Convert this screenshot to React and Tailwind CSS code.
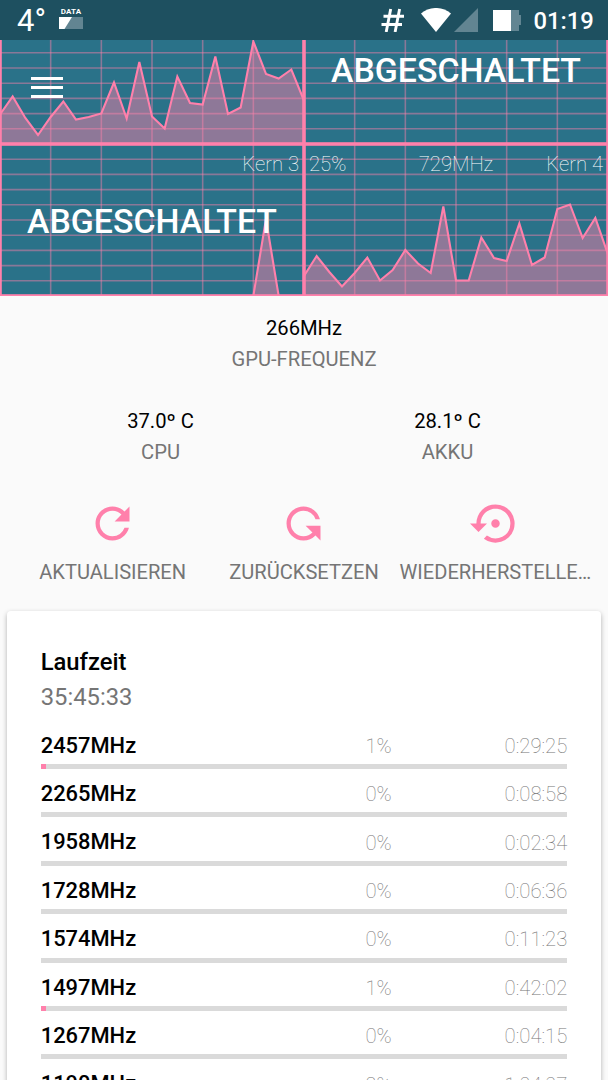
import React from 'react'
import { MdRefresh, MdSettingsBackupRestore } from 'react-icons/md'

const BASE = 152

const core1 = [122.5, 104.5, 126, 143, 125, 109.5, 127.5, 125, 121.5, 90.5, 126.5, 70, 124.5, 136.5, 84.5, 111, 112.5, 64.5, 122, 115.5, 49.5, 82, 86.5, 77.5, 108.5]
const core3 = [152, 152, 152, 152, 152, 152, 152, 152, 152, 152, 152, 152, 152, 152, 152, 152, 152, 152, 152, 152, 152, 75, 152, 152, 152]
const core4 = [132, 112, 128, 142.5, 129, 113.5, 136.5, 126, 106, 119.5, 129, 62.5, 136.5, 136.5, 93.5, 114, 117, 79.5, 121, 113.5, 65, 60.5, 94, 74, 110.5]

const states = [
  { freq: '2457MHz', percent: 1, time: '0:29:25' },
  { freq: '2265MHz', percent: 0, time: '0:08:58' },
  { freq: '1958MHz', percent: 0, time: '0:02:34' },
  { freq: '1728MHz', percent: 0, time: '0:06:36' },
  { freq: '1574MHz', percent: 0, time: '0:11:23' },
  { freq: '1497MHz', percent: 1, time: '0:42:02' },
  { freq: '1267MHz', percent: 0, time: '0:04:15' },
  { freq: '1190MHz', percent: 2, time: '1:04:07' },
]

function Graph({ data }) {
  const step = 304 / 24
  const line = data ? data.map((y, i) => `${i * step},${y}`).join(' ') : ''
  return (
    <svg viewBox="0 0 304 152" className="block h-[152px] w-[304px]">
      {data && <polygon points={`0,${BASE} ${line} 304,${BASE}`} fill="#ff80ab" fillOpacity="0.47" />}
      <g stroke="#ff80ab" strokeOpacity="0.45" strokeWidth="1.6">
        {[1, 2, 3, 4, 5, 6, 7, 8, 9].map(i => <line key={i} x1="0" x2="304" y1={i * 15.2} y2={i * 15.2} />)}
        {[1, 2, 3, 4, 5].map(i => <line key={i} y1="0" y2="152" x1={i * 50.67} x2={i * 50.67} />)}
      </g>
      {data && <polyline points={line} fill="none" stroke="#ff80ab" strokeWidth="2.1" />}
      <rect width="304" height="152" fill="none" stroke="#ff80ab" strokeWidth="3.6" />
    </svg>
  )
}

function StatusBar() {
  return (
    <div className="flex h-10 items-center bg-[#1e5060] text-white">
      <div className="ml-[17px] w-10 text-[31px] leading-10">
        <span className="relative top-px">4°</span>
      </div>
      <div className="ml-[2px] flex w-6 flex-col items-center">
        <span className="-mt-[5px] text-[8px] font-bold leading-[9px] tracking-[0.2px]">DATA</span>
        <svg viewBox="0 0 24 12" className="mt-px h-3 w-6">
          <rect width="24" height="12" fill="#628592" />
          <path d="M0 0h13L5.500 12H0z" fill="#fff" />
        </svg>
      </div>
      <svg viewBox="0 0 24 24" className="ml-[298px] h-6 w-6 shrink-0" fill="none" stroke="#fff" strokeWidth="2.9">
        <path d="M9.700 1 5.200 24M18.600 1l-4.500 23M2.500 8.300H23M.5 16.500h20.500" />
      </svg>
      <svg viewBox="0 0 30 24" className="ml-[15.500px] h-6 w-[30px] shrink-0">
        <path d="M0 5.600C8.500-1.900 21.500-1.900 30 5.600L15 24z" fill="#fff" />
      </svg>
      <svg viewBox="0 0 24 24" className="ml-[3px] h-6 w-6 shrink-0">
        <path d="M24 0v24H0z" fill="#628592" />
      </svg>
      <svg viewBox="0 0 28 21" className="ml-[15px] h-[21px] w-7 shrink-0">
        <path d="M17 0h9v5h2v10h-2v6h-9z" fill="#628592" />
        <path d="M0 0h18v21H0z" fill="#fff" />
      </svg>
      <div className="ml-[13px] text-[23.800px] font-medium leading-10">
        <span className="relative top-px">01:19</span>
      </div>
    </div>
  )
}

function Offline() {
  return <span className="absolute inset-x-0 text-center text-[33.800px] font-medium leading-10 text-white">ABGESCHALTET</span>
}

function Graphs() {
  return (
    <div className="relative grid h-[257px] grid-cols-2 grid-rows-[104px_153px] overflow-hidden">
      <div className="flex items-end overflow-hidden bg-[#2a7289]"><Graph data={core1} /></div>
      <div className="relative flex items-end overflow-hidden bg-[#2a7289]">
        <Graph />
        <div className="absolute inset-x-0 top-[11px]"><Offline /></div>
      </div>
      <div className="relative h-[152px] bg-[#2a7289]">
        <Graph data={core3} />
        <div className="absolute inset-x-0 top-[58px]"><Offline /></div>
        <span className="absolute right-[5px] top-2 text-[20.300px] font-thin leading-6 text-white">Kern 3</span>
      </div>
      <div className="relative h-[152px] bg-[#2a7289]">
        <Graph data={core4} />
        <div className="absolute inset-x-[5px] top-2 grid grid-cols-3 text-[20.300px] font-thin leading-6 text-white">
          <span>25%</span>
          <span className="text-center">729MHz</span>
          <span className="text-right">Kern 4</span>
        </div>
      </div>
      <button className="absolute left-[31px] top-[36.500px] flex w-8 flex-col gap-[5.500px]" aria-label="Menü">
        <span className="h-[3.600px] w-full bg-white" />
        <span className="h-[3.600px] w-full bg-white" />
        <span className="h-[3.600px] w-full bg-white" />
      </button>
    </div>
  )
}

function Info({ value, label }) {
  return (
    <div className="flex flex-col items-center text-[20.200px]">
      <div className="h-[31px] leading-6 text-black">{value}</div>
      <div className="leading-6 text-[#757575]">{label}</div>
    </div>
  )
}

function Action({ icon, label }) {
  return (
    <button className="flex flex-col items-center text-[#ff80ab]">
      {icon}
      <span className="mt-[11px] whitespace-nowrap text-[20.100px] leading-6 text-[#757575]">{label}</span>
    </button>
  )
}

export default function App() {
  return (
    <div className="h-[1080px] w-[608px] overflow-hidden bg-[#fafafa] font-['Roboto',sans-serif]">
      <StatusBar />
      <Graphs />

      <div className="pt-[19px]">
        <Info value="266MHz" label="GPU-FREQUENZ" />
      </div>
      <div className="mt-[38px] grid grid-cols-2 px-[17px]">
        <Info value="37.0º C" label="CPU" />
        <Info value="28.1º C" label="AKKU" />
      </div>

      <div className="mt-[34px] grid grid-cols-3 px-[17px]">
        <Action icon={<MdRefresh className="size-[51px]" />} label="AKTUALISIEREN" />
        <Action icon={<MdRefresh className="size-[51px] -scale-y-100" />} label="ZURÜCKSETZEN" />
        <Action icon={<MdSettingsBackupRestore className="size-[51px]" />} label="WIEDERHERSTELLE…" />
      </div>

      <div className="mx-[7px] mt-[27px] h-[600px] rounded-[4px] bg-white px-[33.700px] pt-9 shadow-[0_2px_5px_rgba(0,0,0,0.3)]">
        <div className="text-[23.800px] font-medium leading-[30px] text-black">Laufzeit</div>
        <div className="mt-[5px] text-[23.800px] leading-[30px] text-[#757575]">35:45:33</div>
        <div className="mt-[17px]">
          {states.map(s => (
            <div key={s.freq} className="h-[48.400px]">
              <div className="flex h-[35px] items-center pb-px text-[20.300px]">
                <span className="w-[176px] text-[21.900px] font-medium text-black">{s.freq}</span>
                <span className="w-[175px] text-right font-thin text-[#757575]">{s.percent}%</span>
                <span className="flex-1 text-right font-thin text-[#757575]">{s.time}</span>
              </div>
              <div className="h-[5px] bg-[#dadada]">
                <div className="h-full bg-[#ff80ab]" style={{ width: `${s.percent}%` }} />
              </div>
            </div>
          ))}
        </div>
      </div>
    </div>
  )
}
